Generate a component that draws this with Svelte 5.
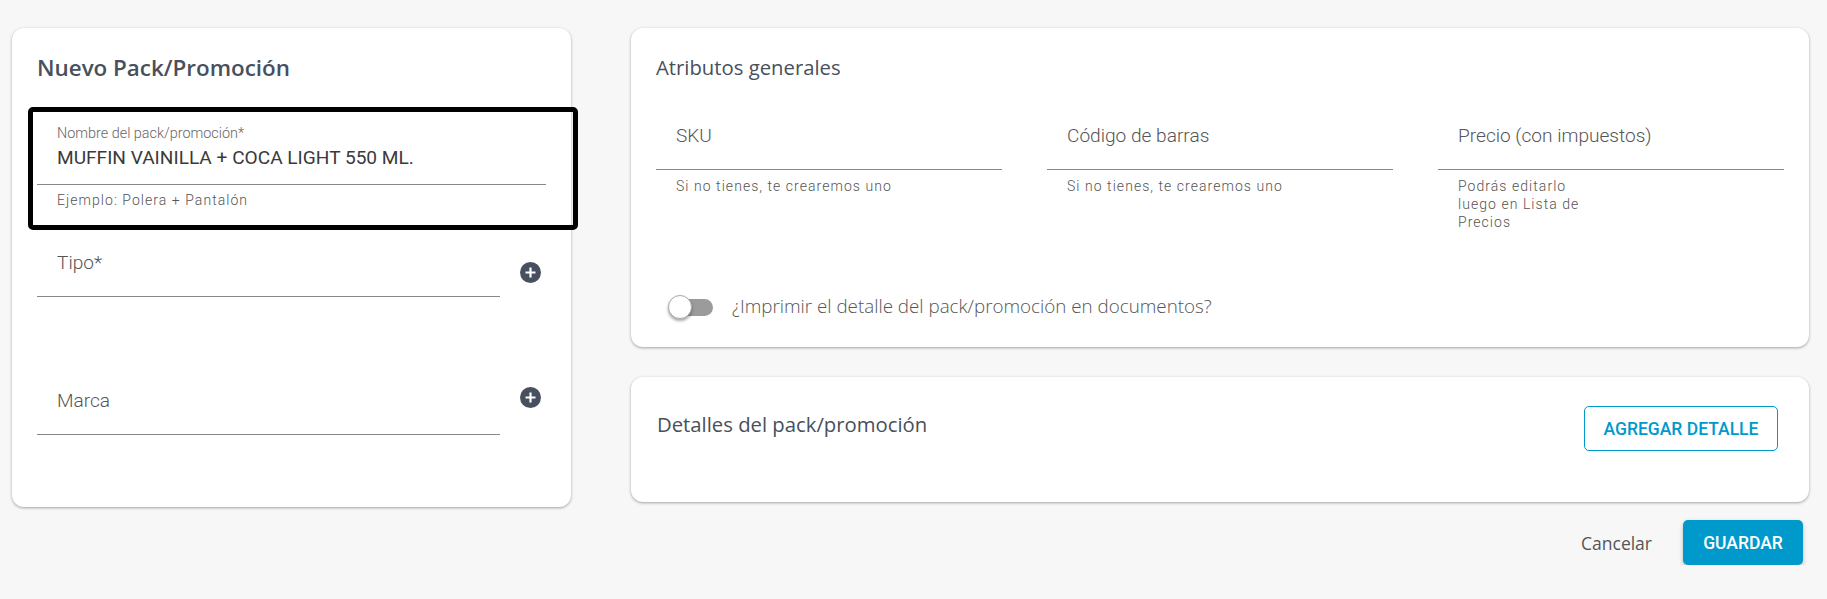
<script>
  let fields = [
    { label: 'SKU', hint: 'Si no tienes, te crearemos uno' },
    { label: 'Código de barras', hint: 'Si no tienes, te crearemos uno' },
    { label: 'Precio (con impuestos)', hint: 'Podrás editarlo luego en Lista de Precios', narrow: true }
  ];
</script>

{#snippet plusIcon(cls)}
  <svg class="plus {cls}" width="21" height="21" viewBox="0 0 21 21" aria-hidden="true">
    <circle cx="10.5" cy="10.5" r="10.5" fill="#48505f" />
    <path d="M10.5 5.5v10M5.5 10.5h10" stroke="#fff" stroke-width="2.2" />
  </svg>
{/snippet}

<div class="page">
  <section class="card side">
    <h1>Nuevo Pack/Promoción</h1>

    <div class="name-box">
      <div class="small-label">Nombre del pack/promoción*</div>
      <div class="value">MUFFIN VAINILLA + COCA LIGHT 550 ML.</div>
      <div class="hint">Ejemplo: Polera + Pantalón</div>
    </div>

    <div class="select-row tipo">
      <div class="input">Tipo*</div>
      {@render plusIcon('plus-tipo')}
    </div>
    <div class="select-row marca">
      <div class="input">Marca</div>
      {@render plusIcon('plus-marca')}
    </div>
  </section>

  <div class="main">
    <section class="card attrs">
      <h2>Atributos generales</h2>
      <div class="attr-grid">
        {#each fields as f}
          <div>
            <div class="input">{f.label}</div>
            <div class="hint" class:narrow={f.narrow}>{f.hint}</div>
          </div>
        {/each}
      </div>
      <div class="toggle-row">
        <span class="toggle"><span class="thumb"></span></span>
        <span class="toggle-label">¿Imprimir el detalle del pack/promoción en documentos?</span>
      </div>
    </section>

    <section class="card details">
      <h2>Detalles del pack/promoción</h2>
      <button class="outline">AGREGAR DETALLE</button>
    </section>

    <div class="actions">
      <button class="cancel">Cancelar</button>
      <button class="save">GUARDAR</button>
    </div>
  </div>
</div>

<style>
  :global(body) {
    background: #f7f7f7;
    font-family: Roboto, sans-serif;
  }

  .page {
    display: flex;
    align-items: flex-start;
    gap: 60px;
    padding: 28px 18px 0 12px;
  }

  .card {
    background: #fff;
    border-radius: 12px;
    box-shadow: 0 1px 3px rgba(0, 0, 0, 0.35);
    box-sizing: border-box;
  }

  h1, h2 {
    margin: 0;
    font-family: "Open Sans", sans-serif;
    color: #47505c;
  }

  h1 {
    font-size: 22.4px;
    font-weight: 600;
    line-height: 28px;
  }

  h2 {
    font-size: 20.3px;
    font-weight: 500;
    line-height: 26px;
  }

  /* ── Left card ── */
  .side {
    width: 559px;
    height: 479px;
    padding: 26px 0 0 25px;
  }

  .name-box {
    width: 550px;
    height: 123px;
    box-sizing: border-box;
    margin: 25px 0 0 -9px;
    padding: 14px 0 0 4px;
    border: 5px solid #000;
    border-radius: 5px;
  }

  .small-label {
    padding-left: 20px;
    font-size: 14.4px;
    font-weight: 300;
    line-height: 16px;
    color: #666;
  }

  .value {
    width: 509px;
    box-sizing: border-box;
    margin-top: 6px;
    padding: 0 0 16px 20px;
    border-bottom: 1px solid #888;
    font-size: 19.1px;
    line-height: 20px;
    color: #3a3a3a;
  }

  .hint {
    padding: 7px 0 0 20px;
    font-size: 14px;
    font-weight: 300;
    line-height: 18px;
    letter-spacing: 1.05px;
    color: #555;
  }

  .hint.narrow {
    width: 130px;
  }

  .name-box .hint {
    padding-top: 6px;
  }

  .select-row {
    display: flex;
    align-items: flex-start;
    gap: 20px;
  }

  .select-row .input {
    width: 463px;
    box-sizing: border-box;
  }

  .tipo {
    padding-top: 21px;
  }

  .marca {
    padding-top: 92px;
  }

  .plus {
    flex-shrink: 0;
  }

  .plus-tipo {
    margin-top: 11px;
  }

  .plus-marca {
    margin-top: -2px;
  }

  .input {
    padding: 0 0 21px 20px;
    border-bottom: 1px solid #888;
    font-size: 19.1px;
    font-weight: 300;
    line-height: 24px;
    color: #555;
  }

  /* ── Right column ── */
  .main {
    flex: 1;
    min-width: 0;
  }

  .attrs {
    height: 319px;
    padding: 26px 25px 0;
  }

  .attr-grid {
    display: grid;
    grid-template-columns: repeat(3, 346px);
    gap: 45px;
    margin-top: 44px;
  }

  .toggle-row {
    display: flex;
    align-items: center;
    height: 24px;
    margin-top: 64px;
    padding-left: 12px;
  }

  .toggle {
    position: relative;
    width: 41px;
    height: 17px;
    margin-left: 4px;
    border-radius: 9px;
    background: #9b9b9b;
  }

  .thumb {
    position: absolute;
    left: -4px;
    top: -4px;
    width: 24px;
    height: 24px;
    box-sizing: border-box;
    border-radius: 50%;
    background: #fff;
    border: 1px solid #aaa;
    box-shadow: 0 2px 3px rgba(0, 0, 0, 0.35);
  }

  .toggle-label {
    margin: -2px 0 0 19px;
    font-family: "Open Sans", sans-serif;
    font-size: 18.8px;
    font-weight: 300;
    color: #555;
  }

  .details {
    display: flex;
    justify-content: space-between;
    align-items: flex-start;
    height: 125px;
    margin-top: 30px;
    padding: 29px 31px 0 26px;
  }

  .details h2 {
    margin-top: 5px;
  }

  button {
    font-family: Roboto, sans-serif;
    font-size: 17.5px;
    font-weight: 500;
    cursor: pointer;
  }

  .outline {
    width: 194px;
    height: 45px;
    padding: 0;
    border: 1px solid #0099cc;
    border-radius: 5px;
    background: #fff;
    color: #0099cc;
  }

  .actions {
    display: flex;
    justify-content: flex-end;
    align-items: center;
    gap: 31px;
    margin-top: 18px;
    padding-right: 6px;
  }

  .cancel {
    padding: 0;
    border: 0;
    background: none;
    font-family: "Open Sans", sans-serif;
    font-weight: 400;
    color: #555;
  }

  .save {
    width: 120px;
    height: 45px;
    padding: 0;
    border: 0;
    border-radius: 5px;
    background: #0099cc;
    color: #fff;
    box-shadow: 0 2px 4px rgba(0, 0, 0, 0.25);
  }
</style>
